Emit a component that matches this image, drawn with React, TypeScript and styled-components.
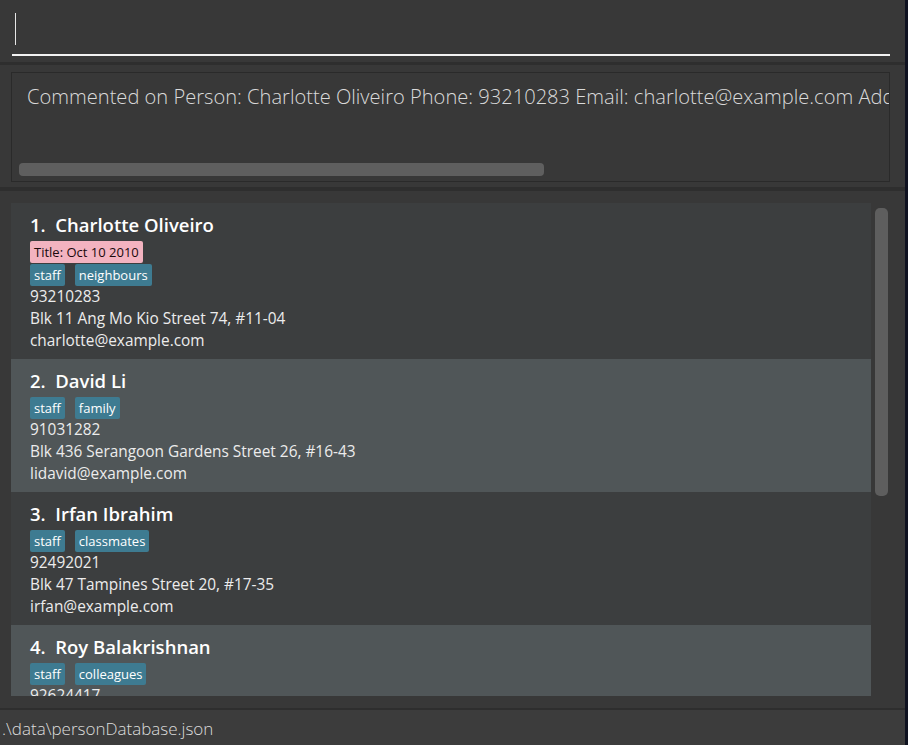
import React from "react";
import styled, { createGlobalStyle } from "styled-components";

const Global = createGlobalStyle`
  html, body { margin: 0; padding: 0; background: #383838; overflow: hidden; }
  #root { width: 908px; height: 745px; }
`;

const Window = styled.div`
  width: 908px;
  height: 745px;
  box-sizing: border-box;
  border-right: 3px solid #0f1220;
  background: #383838;
  display: flex;
  flex-direction: column;
  font-family: "Open Sans", "Noto Sans", sans-serif;
`;

const CommandSection = styled.div`
  height: 62px;
  box-sizing: border-box;
  padding: 5px 15px 0 12px;
  flex: none;
`;

const CommandField = styled.div`
  height: 51px;
  box-sizing: border-box;
  border-bottom: 2px solid #f2f2f2;
  display: flex;
  align-items: center;
  padding: 0 0 2px 3px;
`;

const Caret = styled.div`
  width: 1px;
  height: 32px;
  background: #e6e6e6;
`;

const Divider = styled.div<{ $h: number }>`
  height: ${(p) => p.$h}px;
  background: #2e2e2e;
  flex: none;
`;

const ResultSection = styled.div`
  height: 122px;
  box-sizing: border-box;
  padding: 7px 15px 5px 11px;
  flex: none;
`;

const ResultBox = styled.div`
  height: 110px;
  box-sizing: border-box;
  border: 1px solid #2a2a2a;
  background: #383838;
  overflow: hidden;
  display: flex;
  flex-direction: column;
`;

const ResultText = styled.div`
  padding: 10px 0 0 15px;
  font-weight: 300;
  font-size: 20.1px;
  line-height: 28px;
  color: #dadada;
  white-space: nowrap;
  flex: 1;
`;

const HScroll = styled.div`
  height: 13px;
  width: 525px;
  margin: 0 0 5px 7px;
  border-radius: 4px;
  background: #5f5f5f;
`;

const ListSection = styled.div`
  flex: 1;
  min-height: 0;
  box-sizing: border-box;
  padding: 12px 17px 12px 11px;
  display: flex;
  gap: 4px;
  background: #383838;
`;

const ListViewport = styled.div`
  flex: 1;
  overflow: hidden;
  display: flex;
  flex-direction: column;
`;

const VScrollTrack = styled.div`
  width: 13px;
  padding-top: 5px;
  flex: none;
`;

const VThumb = styled.div`
  height: 288px;
  border-radius: 5px;
  background: #5e5e5e;
`;

const Cell = styled.div<{ $odd: boolean }>`
  flex: none;
  background: ${(p) => (p.$odd ? "#505658" : "#3c3e3f")};
  padding: 10px 0 7px 19px;
  display: flex;
  flex-direction: column;
`;

const Name = styled.div`
  font-size: 18.5px;
  font-weight: 600;
  line-height: 24px;
  color: #ffffff;
  white-space: pre;
`;

const TagRow = styled.div`
  display: flex;
  gap: 10px;
  margin-top: 4px;
  & + & {
    margin-top: 1px;
  }
`;

const Tag = styled.span<{ $pink?: boolean }>`
  font-size: 13px;
  line-height: 22px;
  height: 22px;
  padding: 0 4px;
  border-radius: 2px;
  color: ${(p) => (p.$pink ? "#1a0a0c" : "#ffffff")};
  background: ${(p) => (p.$pink ? "#f3b3c0" : "#3e7b91")};
`;

const Detail = styled.div`
  font-size: 15.4px;
  line-height: 22px;
  color: #ececec;
  white-space: nowrap;
`;

const StatusBar = styled.div`
  height: 35px;
  flex: none;
  background: #3c3c3c;
  display: flex;
  align-items: center;
  padding: 2px 0 0 2px;
  box-sizing: border-box;
  font-size: 17px;
  font-weight: 300;
  color: #dcdcdc;
`;

type Person = {
  name: string;
  title?: string;
  tags: string[];
  phone: string;
  address: string;
  email: string;
};

const people: Person[] = [
  {
    name: "Charlotte Oliveiro",
    title: "Title: Oct 10 2010",
    tags: ["staff", "neighbours"],
    phone: "93210283",
    address: "Blk 11 Ang Mo Kio Street 74, #11-04",
    email: "charlotte@example.com",
  },
  {
    name: "David Li",
    tags: ["staff", "family"],
    phone: "91031282",
    address: "Blk 436 Serangoon Gardens Street 26, #16-43",
    email: "lidavid@example.com",
  },
  {
    name: "Irfan Ibrahim",
    tags: ["staff", "classmates"],
    phone: "92492021",
    address: "Blk 47 Tampines Street 20, #17-35",
    email: "irfan@example.com",
  },
  {
    name: "Roy Balakrishnan",
    tags: ["staff", "colleagues"],
    phone: "92624417",
    address: "Blk 45 Aljunied Street 85, #11-31",
    email: "royb@example.com",
  },
];

export default function App() {
  return (
    <>
      <Global />
      <Window>
        <CommandSection>
          <CommandField>
            <Caret />
          </CommandField>
        </CommandSection>
        <Divider $h={3} />
        <ResultSection>
          <ResultBox>
            <ResultText>
              Commented on Person: Charlotte Oliveiro Phone: 93210283 Email: charlotte@example.com Address: Blk 11 Ang Mo Kio Street 74, #11-04
            </ResultText>
            <HScroll />
          </ResultBox>
        </ResultSection>
        <Divider $h={4} />
        <ListSection>
          <ListViewport>
            {people.map((p, i) => (
              <Cell key={p.name} $odd={i % 2 === 1}>
                <Name>{`${i + 1}.  ${p.name}`}</Name>
                {p.title && (
                  <TagRow>
                    <Tag $pink>{p.title}</Tag>
                  </TagRow>
                )}
                <TagRow>
                  {p.tags.map((t) => (
                    <Tag key={t}>{t}</Tag>
                  ))}
                </TagRow>
                <Detail>{p.phone}</Detail>
                <Detail>{p.address}</Detail>
                <Detail>{p.email}</Detail>
              </Cell>
            ))}
          </ListViewport>
          <VScrollTrack>
            <VThumb />
          </VScrollTrack>
        </ListSection>
        <Divider $h={2} />
        <StatusBar>.\data\personDatabase.json</StatusBar>
      </Window>
    </>
  );
}
